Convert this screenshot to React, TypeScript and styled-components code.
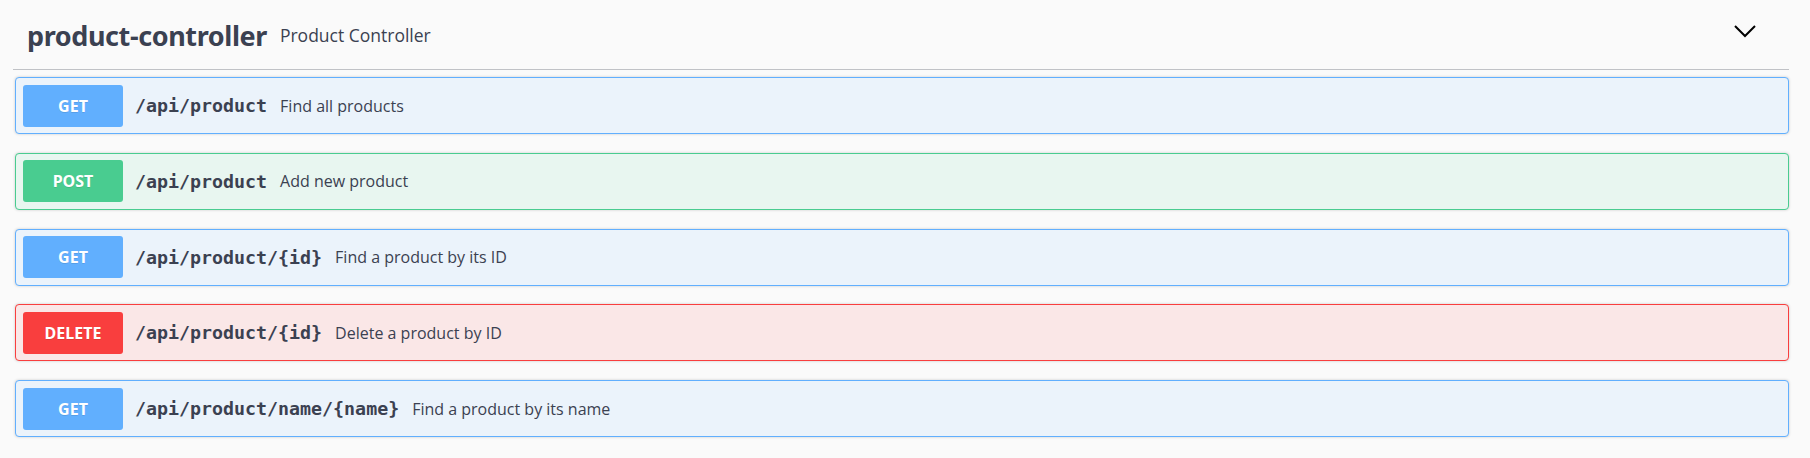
import styled, { createGlobalStyle } from "styled-components";

const GlobalStyle = createGlobalStyle`
  html, body {
    margin: 0;
    padding: 0;
    background: #fafafa;
  }
  body {
    font-family: "Open Sans", "Noto Sans", sans-serif;
    color: #3b4151;
  }
`;

type Method = "get" | "post" | "delete";

const methodColors: Record<Method, { main: string; bg: string }> = {
  get: { main: "#61affe", bg: "#ebf3fb" },
  post: { main: "#49cc90", bg: "#e8f6f0" },
  delete: { main: "#f93e3e", bg: "#fae7e7" },
};

const Section = styled.section`
  padding: 0 21px 21px 15px;
`;

const TagHeader = styled.div`
  display: flex;
  align-items: center;
  height: 69px;
  padding: 0 33px 0 14px;
  margin-left: -2px;
  border-bottom: 1px solid rgba(59, 65, 81, 0.3);
  margin-bottom: 7px;
`;

const TagName = styled.h3`
  margin: 0;
  font-family: "Noto Sans", "Open Sans", sans-serif;
  font-weight: 700;
  font-size: 27px;
  letter-spacing: -0.4px;
  color: #3b4151;
  transform: translateY(1px);
`;

const TagDescription = styled.small`
  flex: 1;
  margin-left: 13px;
  font-size: 17.5px;
  color: #3b4151;
`;

const Chevron = styled.svg`
  width: 22px;
  height: 13px;
  margin-top: -6px;
`;

const List = styled.div`
  display: flex;
  flex-direction: column;
  gap: 18.75px;
`;

const OpBlock = styled.div<{ $method: Method }>`
  display: flex;
  align-items: center;
  height: 43px;
  padding: 6px 7px;
  border: 1px solid ${(p) => methodColors[p.$method].main};
  border-radius: 4px;
  background: ${(p) => methodColors[p.$method].bg};
  box-shadow: 0 0 3px rgba(0, 0, 0, 0.19);
`;

const MethodBadge = styled.span<{ $method: Method }>`
  display: flex;
  align-items: center;
  justify-content: center;
  width: 100px;
  height: 42px;
  border-radius: 3px;
  background: ${(p) => methodColors[p.$method].main};
  color: #fff;
  font-family: "Noto Sans", sans-serif;
  font-weight: 700;
  font-size: 16px;
  text-shadow: 0 1px 0 rgba(0, 0, 0, 0.1);
`;

const Path = styled.span`
  margin-left: 12px;
  font-family: "DejaVu Sans Mono", "Liberation Mono", monospace;
  font-weight: 700;
  font-size: 18.3px;
  color: #3b4151;
`;

const Summary = styled.span`
  margin-left: 13px;
  font-size: 16px;
  color: #3b4151;
`;

const ops: { method: Method; path: string; summary: string }[] = [
  { method: "get", path: "/api/product", summary: "Find all products" },
  { method: "post", path: "/api/product", summary: "Add new product" },
  { method: "get", path: "/api/product/{id}", summary: "Find a product by its ID" },
  { method: "delete", path: "/api/product/{id}", summary: "Delete a product by ID" },
  { method: "get", path: "/api/product/name/{name}", summary: "Find a product by its name" },
];

const App = () => (
  <>
    <GlobalStyle />
    <Section>
      <TagHeader>
        <TagName>product-controller</TagName>
        <TagDescription>Product Controller</TagDescription>
        <Chevron viewBox="0 0 22 13" fill="none">
          <polyline points="1,1 11,11 21,1" stroke="#000" strokeWidth="2" />
        </Chevron>
      </TagHeader>
      <List>
        {ops.map((op, i) => (
          <OpBlock key={i} $method={op.method}>
            <MethodBadge $method={op.method}>{op.method.toUpperCase()}</MethodBadge>
            <Path>{op.path}</Path>
            <Summary>{op.summary}</Summary>
          </OpBlock>
        ))}
      </List>
    </Section>
  </>
);

export default App;
